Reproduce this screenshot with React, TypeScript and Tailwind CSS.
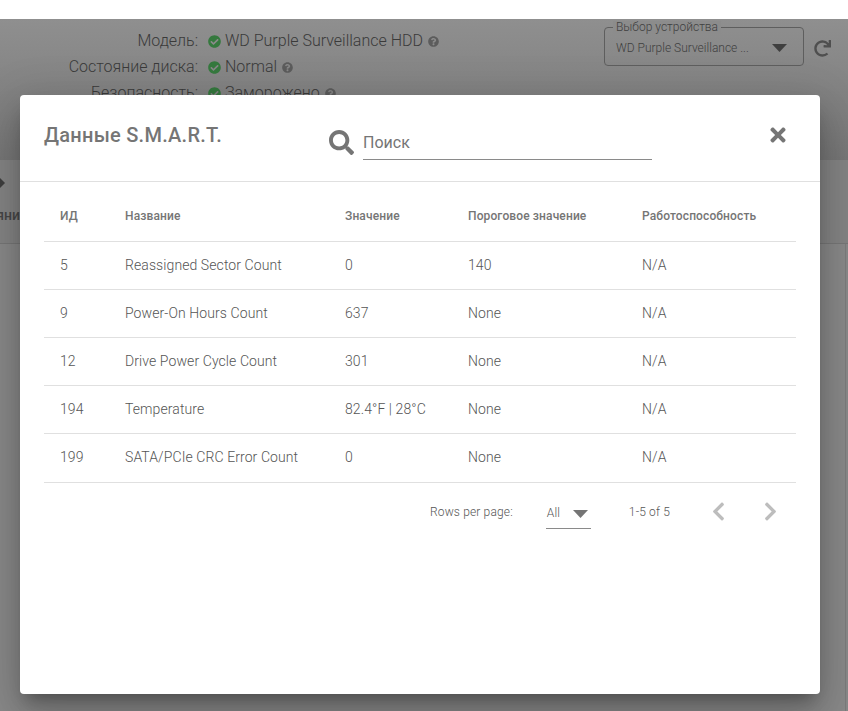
import { FaCheckCircle, FaChevronLeft, FaChevronRight, FaQuestionCircle, FaRedo, FaSearch, FaTimes } from "react-icons/fa";

const statusRows = [
	{ label: "Модель:", value: "WD Purple Surveillance HDD" },
	{ label: "Состояние диска:", value: "Normal" },
	{ label: "Безопасность:", value: "Заморожено" },
];

const smartRows = [
	{ id: "5", name: "Reassigned Sector Count", value: "0", threshold: "140", health: "N/A" },
	{ id: "9", name: "Power-On Hours Count", value: "637", threshold: "None", health: "N/A" },
	{ id: "12", name: "Drive Power Cycle Count", value: "301", threshold: "None", health: "N/A" },
	{ id: "194", name: "Temperature", value: "82.4°F | 28°C", threshold: "None", health: "N/A" },
	{ id: "199", name: "SATA/PCIe CRC Error Count", value: "0", threshold: "None", health: "N/A" },
];

const Caret = () => (
	<svg width="15" height="8" viewBox="0 0 15 8" className="fill-current">
		<polygon points="0,0 15,0 7.5,8" />
	</svg>
);

const BackgroundPage = () => {
	return (
		<div className="h-[692px] bg-[#8d8d8d] flex flex-col">
			<div className="h-[141px] flex bg-gradient-to-b from-[#8f8f8f] to-[#787878]">
				<div className="pt-[9px] w-[590px] flex flex-col">
					{statusRows.map((row) => (
						<div key={row.label} className="h-[26px] flex items-center text-[16px] font-light text-[#3a3a3a]">
							<span className="w-[198px] text-right">{row.label}</span>
							<FaCheckCircle className="ml-[10px] mr-1 text-[13px] text-[#35793e]" />
							<span>{row.value}</span>
							<FaQuestionCircle className="ml-[5px] text-[11px] text-[#5c5c5c]" />
						</div>
					))}
				</div>
				<div className="ml-[14px] mt-2 relative w-[200px] h-[39px] border border-[#5e5e5e] rounded flex items-center pl-[11px] pr-4 pt-0.5 justify-between text-[#3f3f3f]">
					<span className="absolute -top-[7px] left-2 px-[3px] bg-[#8c8c8c] text-[12px] leading-[13px] font-light">Выбор устройства</span>
					<span className="text-[12px] font-light whitespace-nowrap">WD Purple Surveillance ...</span>
					<Caret />
				</div>
				<FaRedo className="ml-[10px] mt-[21px] text-[17px] text-[#4f4f4f]" />
			</div>
			<div className="h-[84px] bg-[#858585] border-b border-[#787878] flex flex-col">
				<svg width="5" height="10" viewBox="0 0 5 10" className="mt-[18px] fill-[#3f3f3f]">
					<polygon points="0,0 5,5 0,10" />
				</svg>
				<div className="mt-[18px] w-5 h-[18px] overflow-hidden flex justify-end text-[14px] leading-[18px] font-medium text-[#474747]">
					<span className="whitespace-nowrap">Состояни</span>
				</div>
			</div>
			<div className="flex-1 bg-[#8a8a8a] flex justify-end">
				<div className="w-[3px] border-l border-[#7c7c7c]" />
			</div>
		</div>
	);
};

const SmartModal = () => {
	return (
		<div className="absolute left-5 top-[95px] w-[800px] h-[599px] bg-white rounded shadow-[0_11px_15px_-7px_rgba(0,0,0,0.3),0_24px_38px_3px_rgba(0,0,0,0.14),0_9px_46px_8px_rgba(0,0,0,0.12)] flex flex-col">
			<div className="h-[87px] border-b border-[#e0e0e0] flex pl-6 pr-8">
				<h2 className="w-[285px] pt-[26px] text-[20px] tracking-[0.27px] leading-7 font-medium text-[#757575]">Данные S.M.A.R.T.</h2>
				<FaSearch className="mt-[35px] text-[25px] text-[#757575]" />
				<div className="ml-[9px] mt-[33px] w-[289px] h-[32px] border-b border-[#8a8a8a] flex items-center pb-0.5 text-[16px] text-[#757575]">Поиск</div>
				<FaTimes className="ml-auto mr-[-1px] mt-[29px] text-[22px] text-[#757575]" />
			</div>
			<div className="px-6">
				<table className="w-[752px] table-fixed border-collapse text-left">
					<thead>
						<tr className="h-[59px] border-b border-[#e0e0e0] text-[12px] tracking-[0.12px] text-[#757575]">
							<th className="w-[65px] pl-4 pt-[10px] font-medium">ИД</th>
							<th className="w-[220px] pl-4 pt-[10px] font-medium">Название</th>
							<th className="w-[123px] pl-4 pt-[10px] font-medium">Значение</th>
							<th className="w-[174px] pl-4 pt-[10px] font-medium">Пороговое значение</th>
							<th className="pl-4 pt-[10px] font-medium">Работоспособность</th>
						</tr>
					</thead>
					<tbody>
						{smartRows.map((row) => (
							<tr key={row.id} className="h-12 last:h-[49px] border-b border-[#e0e0e0] text-[14px] tracking-[0.09px] font-light text-[#555555]">
								<td className="pl-4">{row.id}</td>
								<td className="pl-4">{row.name}</td>
								<td className="pl-4">{row.value}</td>
								<td className="pl-4">{row.threshold}</td>
								<td className="pl-4">{row.health}</td>
							</tr>
						))}
					</tbody>
				</table>
				<div className="h-[58px] flex items-center text-[12px] tracking-[0.15px] font-light text-[#555555] pl-[386px]">
					<span>Rows per page:</span>
					<div className="ml-[33px] w-[45px] h-[29px] mt-[5px] border-b border-[#8a8a8a] flex items-center pl-px">
						<span className="mb-[2px]">All</span>
						<span className="ml-[13px] text-[#757575]"><Caret /></span>
					</div>
					<span className="ml-[38px]">1-5 of 5</span>
					<FaChevronLeft className="ml-[38px] text-[21px] text-[#bdbdbd]" />
					<FaChevronRight className="ml-[31px] text-[21px] text-[#bdbdbd]" />
				</div>
			</div>
		</div>
	);
};

const App = () => {
	return (
		<div className="relative h-[711px] overflow-hidden bg-white pt-[19px] font-['Roboto',sans-serif]">
			<BackgroundPage />
			<SmartModal />
		</div>
	);
};

export default App;
